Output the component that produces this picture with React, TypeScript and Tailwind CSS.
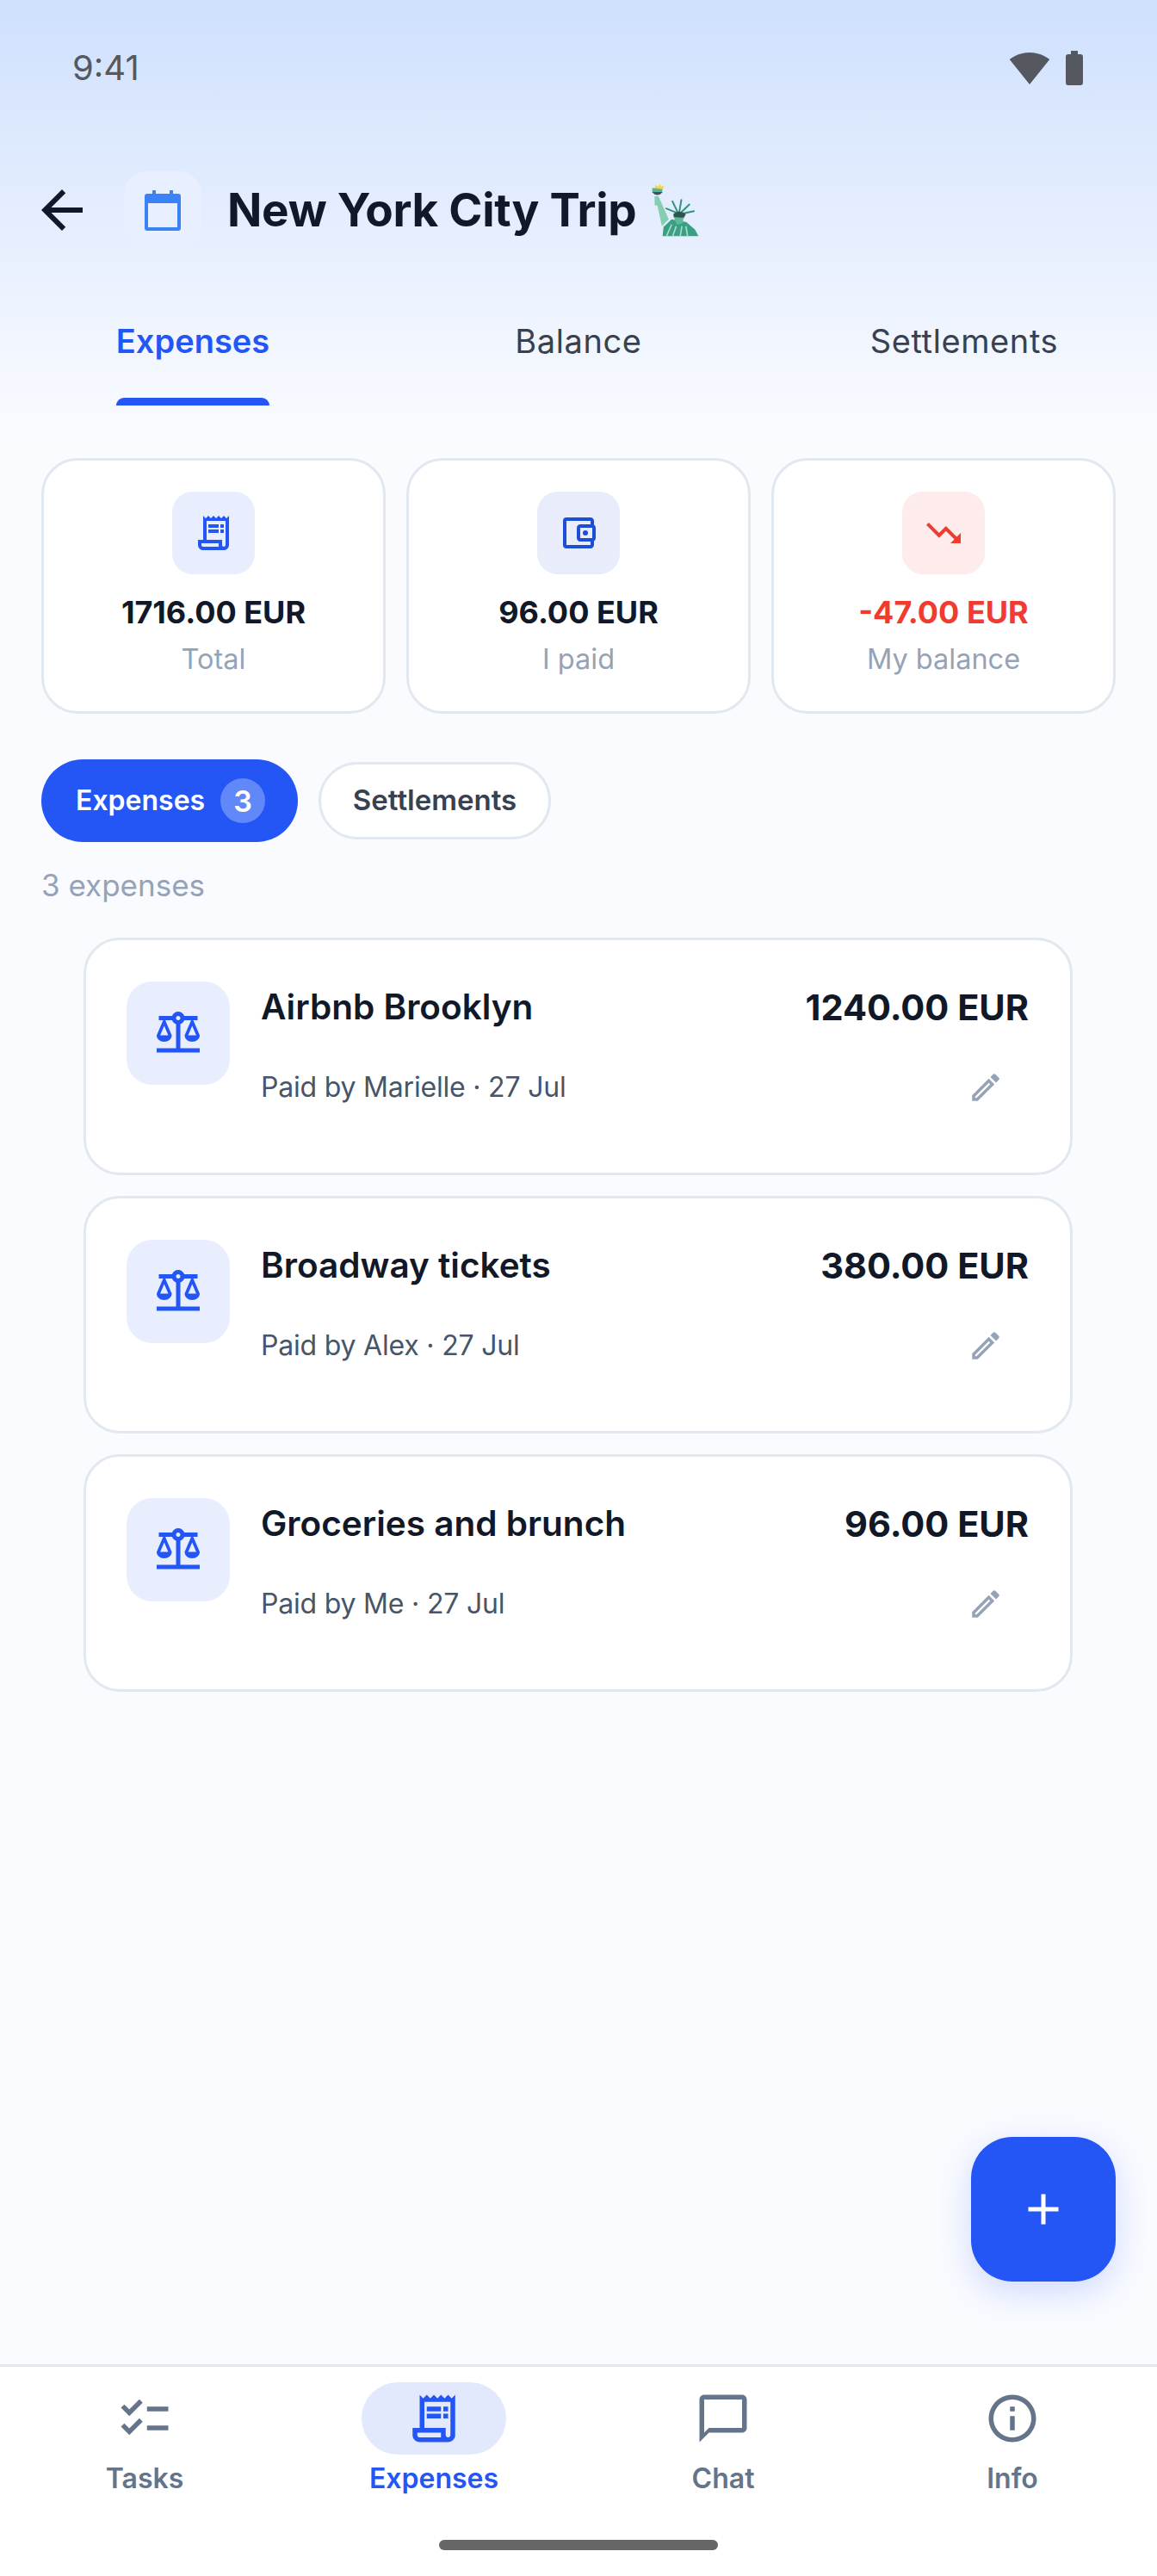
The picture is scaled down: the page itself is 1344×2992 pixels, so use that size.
import React from "react";
import {
  MdArrowBack,
  MdOutlineReceiptLong,
  MdOutlineAccountBalanceWallet,
  MdTrendingDown,
  MdOutlineBalance,
  MdOutlineEdit,
  MdAdd,
  MdChecklist,
  MdChatBubbleOutline,
  MdInfoOutline,
  MdSignalWifi4Bar,
  MdBatteryFull,
} from "react-icons/md";

const expenses = [
  { title: "Airbnb Brooklyn", amount: "1240.00 EUR", sub: "Paid by Marielle · 27 Jul" },
  { title: "Broadway tickets", amount: "380.00 EUR", sub: "Paid by Alex · 27 Jul" },
  { title: "Groceries and brunch", amount: "96.00 EUR", sub: "Paid by Me · 27 Jul" },
];

function CalendarIcon() {
  return (
    <svg viewBox="0 0 42 47" className="w-[42px] h-[47px]">
      <path
        fillRule="evenodd"
        d="M9 0h4v4h16V0h4v4h6a3 3 0 0 1 3 3v37a3 3 0 0 1-3 3H3a3 3 0 0 1-3-3V7a3 3 0 0 1 3-3h6z M4 15v28h34V15z"
        fill="#3b82f6"
      />
    </svg>
  );
}

function StatueOfLiberty() {
  return (
    <svg viewBox="165 100 170 190" className="w-[57px] h-[63px] ml-[16px]">
      <path d="M180 120 L184 105 L193 111 L199 102 L205 111 L214 107 L208 124 Z" fill="#f6d64a" />
      <path d="M172 116 L208 120 L207 130 L172 130 Z" fill="#57b496" />
      <path d="M171 130 Q190 152 209 130 Z" fill="#4b4f52" />
      <path d="M180 145 L194 145 L230 226 L206 250 L196 205 L190 178 L181 177 Z" fill="#86cdb2" />
      {["M263 205 L221 188", "M263 205 L243 163", "M266 205 L274 158", "M270 205 L302 174", "M272 207 L318 197"].map((d) => (
        <path key={d} d={d} stroke="#2f947a" strokeWidth="6" strokeLinecap="round" />
      ))}
      <path d="M208 285 L212 252 L240 226 L292 236 L322 262 L334 285 Z" fill="#3b9f84" />
      <path d="M246 207 Q266 190 290 208 L282 222 L248 220 Z" fill="#33524c" />
      <path d="M248 218 L282 220 L278 240 L258 244 Z" fill="#5cb99b" />
      <path d="M222 285 L240 244 M244 285 L256 250 M270 285 L276 250 M296 285 L290 250" stroke="#a5dcc7" strokeWidth="5" />
    </svg>
  );
}

function StatCard({ icon, tile, value, valueColor, label }: { icon: React.ReactNode; tile: string; value: string; valueColor: string; label: string }) {
  return (
    <div className="flex-1 h-[297px] bg-white border-[3px] border-[#e2e8f0] rounded-[42px] flex flex-col items-center pt-[36px]">
      <div className={`w-[96px] h-[96px] rounded-[24px] flex items-center justify-center ${tile}`}>{icon}</div>
      <div className={`mt-[22px] text-[36px] leading-[44px] font-bold ${valueColor}`}>{value}</div>
      <div className="mt-[11px] text-[32.5px] leading-[44px] text-[#94a3b8]">{label}</div>
    </div>
  );
}

function NavItem({ icon, label, active }: { icon: React.ReactNode; label: string; active?: boolean }) {
  return (
    <div className="flex-1 flex flex-col items-center">
      <div className={`w-[168px] h-[84px] rounded-[42px] flex items-center justify-center ${active ? "bg-[#e2e9fd] text-[#2456f6]" : "text-[#64748b]"}`}>{icon}</div>
      <div className={`mt-[6px] text-[32px] leading-[44px] font-semibold ${active ? "text-[#2456f6]" : "text-[#64748b]"}`}>{label}</div>
    </div>
  );
}

export default function App() {
  return (
    <div className="relative w-[1344px] h-[2992px] flex flex-col overflow-hidden bg-[#fafbff] font-['Inter',sans-serif]">
      {/* header gradient */}
      <div className="h-[500px] shrink-0 flex flex-col bg-gradient-to-b from-[#cfe0fd] to-[#fafbff]">
        <div className="h-[158px] flex items-center justify-between pl-[84px] pr-[72px]">
          <span className="text-[40px] text-[#55585f]">9:41</span>
          <div className="flex items-center gap-[4px]">
            <MdSignalWifi4Bar className="text-[#55585f] text-[48px]" />
            <MdBatteryFull className="text-[#55585f] text-[48px]" />
          </div>
        </div>
        <div className="h-[90px] mt-[41px] flex items-center pl-[36px]">
          <MdArrowBack className="text-[#111827] text-[72px] w-[72px]" />
          <div className="ml-[36px] w-[90px] h-[90px] rounded-[27px] bg-[#e8f0ff] flex items-center justify-center">
            <CalendarIcon />
          </div>
          <h1 className="ml-[30px] text-[53px] leading-[68px] font-bold text-[#111827] tracking-[-0.3px]">New York City Trip</h1>
          <StatueOfLiberty />
        </div>
        <div className="mt-[84px] flex">
          {["Expenses", "Balance", "Settlements"].map((t, i) => (
            <div key={t} className="flex-1 flex flex-col items-center">
              <div className={`inline-flex flex-col items-center text-[38px] leading-[46px] ${i === 0 ? "text-[#2456f6] font-semibold" : "text-[#374151] font-normal tracking-[0.6px]"}`}>
                {t}
                {i === 0 && <div className="mt-[43px] w-full h-[9px] rounded-t-[9px] bg-[#2456f6]" />}
              </div>
            </div>
          ))}
        </div>
      </div>

      <div className="flex-1 flex flex-col px-[48px] pt-[32px]">
        <div className="flex gap-[24px]">
          <StatCard tile="bg-[#e8eefe]" icon={<MdOutlineReceiptLong className="text-[#2456f6] text-[48px]" />} value="1716.00 EUR" valueColor="text-[#111827]" label="Total" />
          <StatCard tile="bg-[#e8ecfb]" icon={<MdOutlineAccountBalanceWallet className="text-[#1d4ed8] text-[48px]" />} value="96.00 EUR" valueColor="text-[#111827]" label="I paid" />
          <StatCard tile="bg-[#fdeceb]" icon={<MdTrendingDown className="text-[#f13b2f] text-[48px]" />} value="-47.00 EUR" valueColor="text-[#f13b2f]" label="My balance" />
        </div>

        <div className="mt-[53px] flex items-center gap-[24px] h-[96px]">
          <div className="h-[96px] w-[298px] rounded-[48px] bg-[#2456f6] flex items-center pl-[40px] text-white text-[32px] font-semibold">
            Expenses
            <span className="ml-[18px] w-[52px] h-[52px] rounded-full bg-[#6088f8] flex items-center justify-center text-[34px]">3</span>
          </div>
          <div className="h-[90px] w-[270px] rounded-[45px] bg-white border-[3px] border-[#e2e8f0] flex items-center justify-center text-[#374151] text-[33px] font-semibold">
            Settlements
          </div>
        </div>

        <div className="mt-[28px] text-[35px] leading-[44px] text-[#94a3b8]">3 expenses</div>

        <div className="mt-[39px] ml-[49px] mr-[50px] flex flex-col gap-[24px]">
          {expenses.map((e) => (
            <div key={e.title} className="h-[276px] bg-white border-[3px] border-[#e2e8f0] rounded-[42px] flex pl-[47px] pr-[48px] pt-[48px]">
              <div className="w-[120px] h-[120px] rounded-[30px] bg-[#e8eefe] flex items-center justify-center shrink-0">
                <MdOutlineBalance className="text-[#2456f6] text-[60px]" />
              </div>
              <div className="flex-1 ml-[36px]">
                <div className="flex justify-between items-center h-[48px] mt-[6px]">
                  <span className="text-[40.5px] font-semibold text-[#111827]">{e.title}</span>
                  <span className="text-[41.5px] font-bold text-[#111827]">{e.amount}</span>
                </div>
                <div className="flex justify-between items-center mt-[45px] h-[48px]">
                  <span className="text-[32px] tracking-[-0.2px] text-[#475569]">{e.sub}</span>
                  <MdOutlineEdit className="text-[#94a3b8] text-[42px] mr-[29px]" />
                </div>
              </div>
            </div>
          ))}
        </div>
      </div>

      <div className="absolute left-[1128px] top-[2482px] w-[168px] h-[168px] rounded-[48px] bg-[#2456f6] shadow-[0_12px_40px_rgba(36,86,246,0.2)] flex items-center justify-center">
        <MdAdd className="text-white text-[60px]" />
      </div>

      <div className="h-[246px] shrink-0 bg-white border-t-[3px] border-[#e2e8f0] flex flex-col">
        <div className="flex pt-[18px]">
          <NavItem label="Tasks" icon={<MdChecklist className="text-[66px]" />} />
          <NavItem label="Expenses" active icon={<MdOutlineReceiptLong className="text-[66px]" />} />
          <NavItem label="Chat" icon={<MdChatBubbleOutline className="text-[66px]" />} />
          <NavItem label="Info" icon={<MdInfoOutline className="text-[66px]" />} />
        </div>
        <div className="mt-[49px] self-center w-[324px] h-[12px] rounded-[6px] bg-[#666666]" />
      </div>
    </div>
  );
}
